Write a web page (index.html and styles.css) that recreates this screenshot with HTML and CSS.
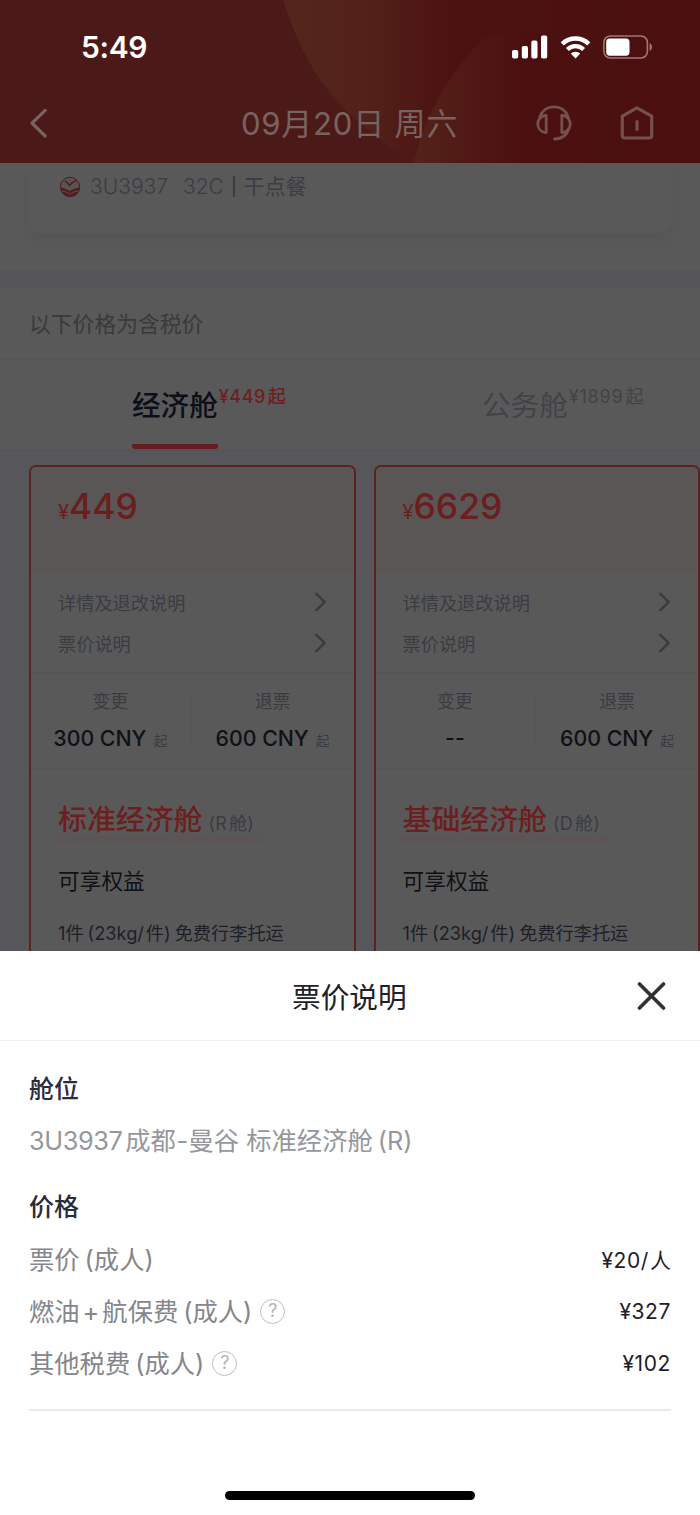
FILE: index.html
```html
<!DOCTYPE html>
<html lang="zh-CN">
<head>
    <meta charset="UTF-8">
    <meta name="viewport" content="width=device-width, initial-scale=1.0">
    <title>票价说明</title>
    <link rel="stylesheet" href="styles.css">
</head>
<body>
    <div class="page">
        <header class="header">
            <svg class="header-bg" width="700" height="163" viewBox="0 0 700 163">
                <defs>
                    <linearGradient id="swirl" x1="283" y1="0" x2="700" y2="0" gradientUnits="userSpaceOnUse">
                        <stop offset="0" stop-color="#53261d"/>
                        <stop offset="0.2" stop-color="#52211a"/>
                        <stop offset="0.4" stop-color="#4c1210"/>
                        <stop offset="1" stop-color="#4a0f0e"/>
                    </linearGradient>
                    <linearGradient id="wedge" x1="412" y1="0" x2="530" y2="0" gradientUnits="userSpaceOnUse">
                        <stop offset="0" stop-color="#53231b"/>
                        <stop offset="0.5" stop-color="#4f1814"/>
                        <stop offset="1" stop-color="#4a0f0e"/>
                    </linearGradient>
                </defs>
                <path d="M283 0C302 58 325 92 352 116C374 136 394 150 414 163H700V0Z" fill="url(#swirl)"/>
                <path d="M413 163C424 124 443 74 490 34H560V163Z" fill="url(#wedge)"/>
            </svg>
            <div class="status">
                <span class="time">5:49</span>
                <div class="status-icons">
                    <svg width="36" height="24" viewBox="0 0 36 24" fill="#fff">
                        <rect x="0" y="15" width="6.2" height="8.5" rx="1.8"/>
                        <rect x="9.8" y="11" width="6.2" height="12.5" rx="1.8"/>
                        <rect x="19.3" y="5.6" width="6.2" height="17.9" rx="1.8"/>
                        <rect x="29" y="0.5" width="6.2" height="23" rx="1.8"/>
                    </svg>
                    <svg width="31" height="24" viewBox="0 0 31 24">
                        <path d="M2.2 8.9A19.2 19.2 0 0 1 28.8 8.9" fill="none" stroke="#fff" stroke-width="4.4"/>
                        <path d="M7.4 14.5A11.6 11.6 0 0 1 23.6 14.5" fill="none" stroke="#fff" stroke-width="4.2"/>
                        <path d="M15.5 23.4L10.8 18.6A6.8 6.8 0 0 1 20.2 18.6Z" fill="#fff"/>
                    </svg>
                    <svg width="50" height="24" viewBox="0 0 50 24">
                        <rect x="0.9" y="1" width="43.5" height="22" rx="6.5" fill="none" stroke="#a27776" stroke-width="1.6"/>
                        <rect x="3.2" y="3.4" width="23.3" height="17.3" rx="3.6" fill="#fff"/>
                        <path d="M46.6 8C49.8 9.4 49.8 14.6 46.6 16Z" fill="#a27776"/>
                    </svg>
                </div>
            </div>
            <div class="nav">
                <svg class="back" width="20" height="32" viewBox="0 0 20 32">
                    <path d="M17.2 3.4L4 16.2L17.2 29" fill="none" stroke="#796361" stroke-width="3.2" stroke-linecap="round" stroke-linejoin="round"/>
                </svg>
                <h1 class="nav-title">09月20日 周六</h1>
                <div class="nav-icons">
                    <svg width="36" height="36" viewBox="0 0 36 36" fill="none" stroke="#74504e" stroke-width="2.8" stroke-linecap="round" stroke-linejoin="round">
                        <path d="M3.800 12C6 5.500 11.500 1.800 18 1.800C24.500 1.800 30 5.500 32.200 12"/>
                        <path d="M10.200 10.500V27.500H9C4.500 26.500 1.800 23 1.800 19C1.800 15 4.500 11 9 10.500Z"/>
                        <path d="M25.800 10.500V27.500H27C31.500 26.500 34.200 23 34.200 19C34.200 15 31.500 11 27 10.500Z"/>
                        <path d="M33 23C31 30 25.500 33.800 18.500 34"/>
                    </svg>
                    <svg width="34" height="34" viewBox="0 0 34 34" fill="none" stroke="#74504e" stroke-width="3.2" stroke-linejoin="round" stroke-linecap="round">
                        <path d="M17 1.900L31.700 10.200V29.500Q31.700 32 29.200 32H4.800Q2.300 32 2.300 29.500V10.200Z"/>
                        <path d="M17 15.500V23.500"/>
                    </svg>
                </div>
            </div>
        </header>

        <section class="flight">
            <div class="flight-card">
                <svg class="logo" width="22" height="22" viewBox="0 0 22 22">
                    <circle cx="11" cy="11" r="9.700" fill="#5b5353" stroke="#511d1f" stroke-width="1"/>
                    <path d="M1.500 11.500C5 12 8 13.500 10.500 15C13 13.500 17 12 20.500 11.500C20.500 17 16 20.700 11 20.700C6 20.700 2 17 1.500 11.500Z" fill="#511d1f"/>
                    <path d="M6 5C8 6 9.500 7.500 10.500 9.500C12.500 7 14.500 5.500 17.500 4.500" fill="none" stroke="#511d1f" stroke-width="1.500"/>
                    <path d="M3 15C6 15.500 9 16.500 11 18.500C13 16.500 16 15.500 19 15" fill="none" stroke="#6b5a5a" stroke-width="0.800"/>
                </svg>
                <span class="flight-no">3U3937</span>
                <span class="flight-seat">32C</span>
                <span class="bar"></span>
                <span class="meal">干点餐</span>
            </div>
        </section>

        <div class="tax-note">以下价格为含税价</div>

        <nav class="tabs">
            <div class="tab active">
                <span class="tab-name">经济舱</span><span class="tab-price">¥449<i>起</i></span>
            </div>
            <div class="tab">
                <span class="tab-name">公务舱</span><span class="tab-price">¥1899<i>起</i></span>
            </div>
        </nav>

        <main class="fares">
            <article class="fare">
                <div class="fare-price"><small>¥</small>449</div>
                <div class="links">
                    <div class="link"><span>详情及退改说明</span><svg width="12" height="20" viewBox="0 0 12 20"><path d="M1.500 1L10.500 10L1.500 19"/></svg></div>
                    <div class="link"><span>票价说明</span><svg width="12" height="20" viewBox="0 0 12 20"><path d="M1.500 1L10.500 10L1.500 19"/></svg></div>
                </div>
                <div class="fees">
                    <div class="fee"><span class="fee-label">变更</span><span class="fee-value">300 CNY<small>起</small></span></div>
                    <div class="fee"><span class="fee-label">退票</span><span class="fee-value">600 CNY<small>起</small></span></div>
                </div>
                <div class="fare-info">
                    <h2 class="fare-name">标准经济舱<small>(R<i>舱</i>)</small></h2>
                    <h3 class="benefit-title">可享权益</h3>
                    <p class="benefit">1件<span class="paren">(23kg/</span><span class="close">件)</span>免费行李托运</p>
                </div>
            </article>
            <article class="fare">
                <div class="fare-price"><small>¥</small>6629</div>
                <div class="links">
                    <div class="link"><span>详情及退改说明</span><svg width="12" height="20" viewBox="0 0 12 20"><path d="M1.500 1L10.500 10L1.500 19"/></svg></div>
                    <div class="link"><span>票价说明</span><svg width="12" height="20" viewBox="0 0 12 20"><path d="M1.500 1L10.500 10L1.500 19"/></svg></div>
                </div>
                <div class="fees">
                    <div class="fee"><span class="fee-label">变更</span><span class="fee-value">--</span></div>
                    <div class="fee"><span class="fee-label">退票</span><span class="fee-value">600 CNY<small>起</small></span></div>
                </div>
                <div class="fare-info">
                    <h2 class="fare-name">基础经济舱<small>(D<i>舱</i>)</small></h2>
                    <h3 class="benefit-title">可享权益</h3>
                    <p class="benefit">1件<span class="paren">(23kg/</span><span class="close">件)</span>免费行李托运</p>
                </div>
            </article>
        </main>

        <section class="sheet">
            <div class="sheet-head">
                <h2 class="sheet-title">票价说明</h2>
                <svg class="close-icon" width="30" height="30" viewBox="0 0 30 30">
                    <path d="M2.500 3L26.500 27M26.500 3L2.500 27" stroke="#303030" stroke-width="3.600" stroke-linecap="round"/>
                </svg>
            </div>
            <div class="sheet-body">
                <h3 class="group-title">舱位</h3>
                <p class="cabin"><span class="cabin-no">3U3937</span>成都<span class="dash">-</span>曼谷 标准经济舱<span class="paren">(R)</span></p>
                <h3 class="group-title price-title">价格</h3>
                <div class="price-row">
                    <span class="price-label">票价<span class="paren">(</span>成人)</span>
                    <span class="price-value">¥20/<i>人</i></span>
                </div>
                <div class="price-row">
                    <span class="price-label">燃油<span class="plus">+</span>航保费<span class="paren">(</span>成人)</span>
                    <span class="help">?</span>
                    <span class="price-value">¥327</span>
                </div>
                <div class="price-row">
                    <span class="price-label">其他税费<span class="paren">(</span>成人)</span>
                    <span class="help">?</span>
                    <span class="price-value">¥102</span>
                </div>
            </div>
            <div class="home-bar"></div>
        </section>
    </div>
</body>
</html>
```

FILE: styles.css
```css
* {
    box-sizing: border-box;
}
body {
    margin: 0;
    background-color: #595959;
    font-family: Inter, "Noto Sans CJK SC", sans-serif;
    color: #14161f;
}
h1, h2, h3, p {
    margin: 0;
    font-weight: 400;
}
i {
    font-style: normal;
}
svg {
    display: block;
    flex: none;
}
.page {
    width: 700px;
    height: 1515px;
    overflow: hidden;
    display: flex;
    flex-direction: column;
    white-space: nowrap;
}

/* header */
.header {
    position: relative;
    flex: none;
    height: 163px;
    background-color: #4b1a18;
}
.header-bg {
    position: absolute;
    top: 0;
    left: 0;
}
.status, .nav {
    position: relative;
    display: flex;
    align-items: center;
    justify-content: space-between;
}
.status {
    height: 83px;
    padding: 10px 47px 0 81px;
}
.time {
    color: #fff;
    font-size: 30px;
    font-weight: 600;
    letter-spacing: -0.4px;
}
.status-icons {
    display: flex;
    gap: 12px;
}
.nav {
    height: 80px;
    padding: 0 46px 0 28px;
}
.nav-title {
    margin-left: 115px;
    padding-bottom: 3px;
    font-size: 31px;
    letter-spacing: 0.8px;
    color: #796361;
}
.nav-icons {
    display: flex;
    align-items: center;
    gap: 48px;
}

/* flight summary */
.flight {
    flex: none;
    height: 125px;
    padding: 0 28px;
    border-bottom: 18px solid #56565a;
}
.flight-card {
    display: flex;
    align-items: center;
    height: 70px;
    padding: 0 31px 23px;
    border-radius: 0 0 14px 14px;
    box-shadow: 0 8px 14px rgba(0, 0, 0, 0.04);
    font-size: 21px;
    color: #3b3d44;
}
.flight-no {
    margin-left: 9px;
    width: 93px;
    font-weight: 300;
}
.bar {
    width: 1.5px;
    height: 21px;
    margin: 0 9px 0 9px;
    background-color: #3b3d44;
}
.flight-seat {
    width: 41px;
    font-weight: 300;
}
.meal {
    padding-bottom: 3px;
}
.tax-note {
    flex: none;
    height: 72px;
    padding-left: 29px;
    line-height: 72px;
    font-size: 21.8px;
    color: #3a3a3a;
    border-bottom: 1px solid #545459;
}

/* cabin tabs */
.tabs {
    flex: none;
    display: flex;
    height: 91px;
    border-bottom: 2px solid #545459;
}
.tab {
    display: flex;
    align-items: flex-start;
    width: 351px;
    padding-left: 132px;
    color: #424348;
}
.tab-name {
    height: 89px;
    padding-top: 11px;
    line-height: 70px;
    font-size: 28.6px;
}
.tab-price {
    margin-left: 1px;
    line-height: 73px;
    font-size: 18px;
    letter-spacing: 0.8px;
}
.tab-price i {
    margin-left: 2px;
}
.active .tab-name {
    color: #0b0f18;
    font-weight: 500;
    border-bottom: 5px solid #671d1f;
    border-radius: 0 0 3px 3px;
}
.active .tab-price {
    color: #6c2020;
    font-weight: 500;
    letter-spacing: 0.5px;
}

/* fare cards */
.fares {
    flex: none;
    display: flex;
    gap: 18px;
    height: 500px;
    padding: 14px 0 0 29px;
    background-color: #56565b;
}
.fare {
    flex: none;
    width: 326.5px;
    height: 510px;
    border: 2px solid #5c2220;
    border-radius: 7px;
    background-color: #595959;
    overflow: hidden;
}
.fare-price {
    height: 107px;
    padding: 18px 27px 0;
    line-height: 44px;
    font-size: 35.5px;
    font-weight: 500;
    color: #6c1d1d;
    background-color: #5a5655;
}
.fare-price small {
    font-size: 20px;
    font-weight: 400;
}
.links {
    height: 100px;
    padding: 9px 28px 0 27px;
    border-bottom: 2px solid #545454;
}
.link {
    display: flex;
    align-items: center;
    justify-content: space-between;
    height: 41px;
    font-size: 18.2px;
    color: #3b3c42;
}
.link span {
    padding-bottom: 3px;
}
.link svg {
    margin-bottom: 4px;
}
.link path {
    fill: none;
    stroke: #3a3b3f;
    stroke-width: 2.4;
}
.fees {
    display: flex;
    height: 95px;
    border-bottom: 1px solid #555;
}
.fee {
    display: flex;
    flex-direction: column;
    align-items: center;
    width: 161px;
    padding: 10px 1px 0 0;
}
.fee + .fee {
    margin: 22px 0 23px;
    padding: 0;
    width: 164px;
    border-left: 1px solid #555;
}
.fee + .fee .fee-label {
    margin-top: -12px;
}
.fee-label {
    line-height: 36px;
    font-size: 18px;
    color: #3b3c42;
}
.fee-value {
    line-height: 36px;
    font-size: 21.3px;
    font-weight: 500;
    color: #101116;
}
.fee-value small {
    margin-left: 7px;
    font-size: 14px;
    font-weight: 400;
    color: #3b3c42;
}
.fare-info {
    padding: 30px 27px 0;
}
.fare-name {
    display: inline-block;
    height: 44px;
    line-height: 42px;
    font-size: 28.9px;
    font-weight: 500;
    color: #6c1f1f;
    background: linear-gradient(#5b5655, #5b5655) 0 100% / 100% 9px no-repeat;
    margin-left: -3px;
    padding: 0 8px 0 3px;
}
.fare-name small {
    margin-left: 6px;
    font-size: 18px;
    font-weight: 400;
    letter-spacing: 0.2px;
    color: #3b3c42;
}
.fare-name i {
    margin-left: 2px;
}
.benefit-title {
    margin-top: 14px;
    line-height: 48px;
    font-size: 21.7px;
    color: #101116;
}
.benefit {
    margin-top: 10px;
    line-height: 36px;
    font-size: 18.2px;
    color: #1d2029;
}
.benefit .paren {
    margin: 0 2px 0 4px;
}
.benefit .close {
    margin-right: 4px;
}

/* bottom sheet */
.sheet {
    flex: none;
    height: 564px;
    background-color: #fff;
}
.sheet-head {
    display: flex;
    align-items: center;
    height: 90px;
    padding: 0 33px 0 292px;
    justify-content: space-between;
    border-bottom: 1px solid #f1f1f3;
}
.sheet-title {
    font-size: 28.7px;
    color: #1e202a;
}
.sheet-body {
    height: 370px;
    margin: 0 29px;
    padding-top: 22px;
    border-bottom: 2px solid #e9e9ea;
}
.group-title {
    line-height: 53px;
    height: 52px;
    font-size: 25px;
    font-weight: 500;
    color: #2a2c3a;
}
.cabin {
    line-height: 52px;
    font-size: 25.3px;
    color: #95979c;
}
.cabin-no {
    margin-right: 3px;
    letter-spacing: -0.4px;
}
.dash {
    margin: 0 0.5px;
}
.price-title {
    margin-top: 14px;
}
.price-row {
    display: flex;
    align-items: center;
    height: 52px;
}
.price-label {
    padding-bottom: 2px;
    font-size: 25.3px;
    color: #84868b;
}
.sheet .paren {
    margin-left: 5px;
}
.plus {
    margin: 0 3px;
}
.help {
    width: 25px;
    height: 25px;
    margin-left: 8px;
    border: 1.8px solid #bfbfc2;
    border-radius: 50%;
    line-height: 22px;
    text-align: center;
    font-size: 18px;
    color: #b4b4b8;
}
.price-value {
    margin-left: auto;
    font-size: 21px;
    letter-spacing: 0.6px;
    color: #1e202a;
}
.price-value i {
    margin-left: 1px;
    letter-spacing: 0;
}
.home-bar {
    width: 250px;
    height: 9px;
    margin: 80px auto 0;
    border-radius: 5px;
    background-color: #000;
}
```
